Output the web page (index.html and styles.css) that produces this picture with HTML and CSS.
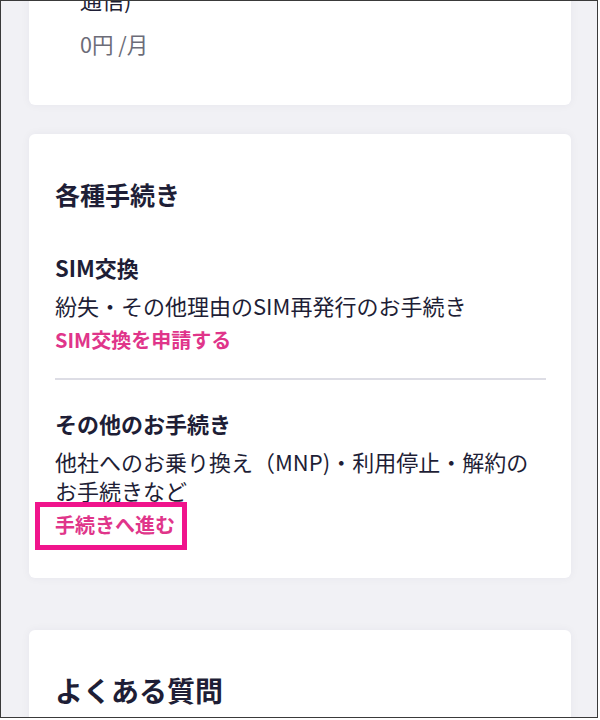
FILE: index.html
```html
<!DOCTYPE html>
<html lang="ja">
    <head>
        <meta charset="UTF-8">
        <title>各種手続き</title>
        <link rel="stylesheet" href="styles.css">
    </head>
    <body>
        <div class="screen">
            <!-- 料金カード（上が切れている） -->
            <div class="card card-plan">
                <div class="plan-row">
                    <p class="plan-label">通信)</p>
                    <p class="plan-price">0円 /月</p>
                </div>
            </div>

            <!-- 各種手続き -->
            <div class="card card-proc">
                <h2 class="card-title">各種手続き</h2>
                <div class="proc-item">
                    <h3 class="proc-title">SIM交換</h3>
                    <p class="proc-desc">紛失・その他理由のSIM再発行のお手続き</p>
                    <a class="proc-link" href="javascript:;">SIM交換を申請する</a>
                </div>
                <div class="proc-line"></div>
                <div class="proc-item proc-item-last">
                    <h3 class="proc-title">その他のお手続き</h3>
                    <p class="proc-desc">他社へのお乗り換え（MNP)・利用停止・解約の<br>お手続きなど</p>
                    <a class="proc-link marked" href="javascript:;">手続きへ進む</a>
                </div>
            </div>

            <!-- よくある質問 -->
            <div class="card card-faq">
                <h2 class="faq-title">よくある質問</h2>
            </div>
        </div>
    </body>
</html>
```

FILE: styles.css
```css
*{
    margin: 0;
    padding: 0;
    box-sizing: border-box;
}
body{
    width: 600px;
    height: 720px;
    background-color: #fff;
    font-family: "Noto Sans CJK JP", "Noto Sans", sans-serif;
    color: #1e1e36;
}
.screen{
    width: 598px;
    height: 718px;
    border: 1px solid #3a3a3a;
    background-color: #f1f1f5;
    padding: 0 26px 0 28px;
    overflow: hidden;
}
.card{
    background-color: #fff;
    border-radius: 6px;
    box-shadow: 0 0 10px rgba(40, 40, 80, 0.05);
}

/* 料金 */
.card-plan{
    margin-top: -42px;
    padding: 24px 26px 45px 26px;
}
.plan-row{
    margin-left: 25px;
}
.plan-label{
    font-size: 22px;
    line-height: 32px;
}
.plan-price{
    margin-top: 13px;
    font-size: 21.5px;
    line-height: 32px;
    color: #6c6c78;
}

/* 各種手続き */
.card-proc{
    margin-top: 29px;
    padding: 42px 25px 38px 26px;
}
.card-title{
    font-size: 25px;
    line-height: 36px;
    font-weight: 700;
}
.proc-item{
    margin-top: 39px;
}
.proc-item-last{
    margin-top: 27px;
}
.proc-title{
    font-size: 22px;
    line-height: 32px;
    font-weight: 700;
}
.proc-desc{
    margin-top: 8px;
    font-size: 22px;
    line-height: 29px;
}
.proc-link{
    display: inline-block;
    margin-top: 5px;
    font-size: 20px;
    line-height: 30px;
    font-weight: 700;
    color: #e0358a;
    text-decoration: none;
}
.proc-line{
    margin-top: 23px;
    height: 2px;
    background-color: #dddde5;
}
.marked{
    position: relative;
}
.marked::after{
    content: "";
    position: absolute;
    left: -20px;
    top: -8px;
    right: -12px;
    bottom: -10px;
    border: 5px solid #f0148c;
}

/* よくある質問 */
.card-faq{
    margin-top: 52px;
    height: 200px;
    padding: 42px 26px 0 26px;
}
.faq-title{
    font-size: 28px;
    line-height: 36px;
    font-weight: 700;
}
```
